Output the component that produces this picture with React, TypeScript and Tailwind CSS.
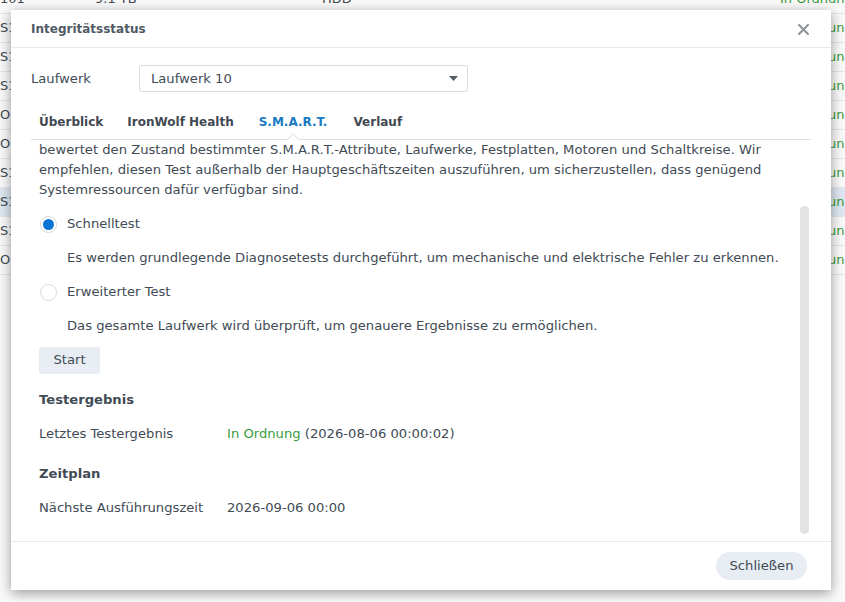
import React from 'react';

const font = { fontFamily: '"DejaVu Sans", Verdana, sans-serif' };

const bgRows = [
  { a: '101', b: '9.1 TB', c: 'HDD' },
  { a: 'S1' },
  { a: 'S1' },
  { a: 'S1' },
  { a: 'O1' },
  { a: 'O1' },
  { a: 'S1' },
  { a: 'S1', active: true },
  { a: 'S1' },
  { a: 'O1' },
];

function BackgroundTable() {
  return (
    <div className="mt-[-15px]">
      {bgRows.map((r, i) => (
        <div
          key={i}
          className={`flex h-[29px] items-center border-b border-[#e3e6e9] text-[13px] text-[#414b55] ${r.active ? 'bg-[#dfe8f2]' : ''}`}
        >
          <span className="w-[95px] shrink-0">{r.a}</span>
          <span className="w-[227px] shrink-0">{r.b}</span>
          <span className="w-[458px] shrink-0">{r.c}</span>
          <span className="shrink-0 whitespace-nowrap text-[#3a9c3a]">In Ordnung</span>
        </div>
      ))}
    </div>
  );
}

function Radio({ checked, label }: { checked?: boolean; label: string }) {
  return (
    <div className="flex h-[34px] items-center">
      <span className="ml-[1px] flex h-[17px] w-[17px] items-center justify-center rounded-full border border-[#d6dbe0] bg-white">
        {checked && <span className="h-[11px] w-[11px] rounded-full bg-[#0d74d6]" />}
      </span>
      <span className="ml-[10px]">{label}</span>
    </div>
  );
}

export default function App() {
  return (
    <div className="relative h-[602px] w-[845px] overflow-hidden bg-[#fafafa]" style={font}>
      <BackgroundTable />

      {/* dialog */}
      <div className="absolute left-[11px] top-[10px] flex h-[580px] w-[820px] flex-col bg-white text-[13.15px] text-[#414b55] shadow-[0_3px_12px_rgba(0,0,0,0.4)]">
        <div className="flex h-[38px] shrink-0 items-center justify-between border-b border-[#e6e9ec] pl-[20px] pr-[22px]">
          <span className="text-[12px] font-bold text-[#505a64]">Integritätsstatus</span>
          <svg width="11" height="11" viewBox="0 0 11 11" className="mt-[1px]">
            <path d="M1 1 L10 10 M10 1 L1 10" stroke="#8c939b" strokeWidth="2" strokeLinecap="round" />
          </svg>
        </div>

        <div className="flex min-h-0 flex-1 flex-col px-[20px]">
          <div className="mt-[17px] flex h-[27px] items-center">
            <span className="mt-[1px] w-[108px]">Laufwerk</span>
            <div className="flex h-[27px] w-[329px] items-center justify-between rounded-[3px] border border-[#d7dce1] pl-[11px] pr-[9px]">
              <span className="mt-[1px]">Laufwerk 10</span>
              <svg width="9" height="5" viewBox="0 0 9 5">
                <path d="M0 0 L9 0 L4.5 5 Z" fill="#555d66" />
              </svg>
            </div>
          </div>

          <div className="mt-[14px] flex h-[34px] items-center border-b border-[#dde1e5] pl-[8px] text-[12px] font-bold text-[#3f4952]">
            <span className="mt-[-1px]">Überblick</span>
            <span className="ml-[24px] mt-[-1px]">IronWolf Health</span>
            <span className="relative ml-[25px] flex h-full items-center text-[#1a7ac2]">
              <span className="mt-[-1px]">S.M.A.R.T.</span>
              <span className="absolute bottom-[-5px] left-1/2 h-[9px] w-[9px] -translate-x-1/2 rotate-45 border-l border-t border-[#dde1e5] bg-white" />
            </span>
            <span className="ml-[26px] mt-[-1px]">Verlauf</span>
          </div>

          <div className="relative min-h-0 flex-1 overflow-hidden pl-[8px]">
            <p className="mt-0 whitespace-nowrap leading-[20px]">
              bewertet den Zustand bestimmter S.M.A.R.T.-Attribute, Laufwerke, Festplatten, Motoren und Schaltkreise. Wir
              <br />
              empfehlen, diesen Test außerhalb der Hauptgeschäftszeiten auszuführen, um sicherzustellen, dass genügend
              <br />
              Systemressourcen dafür verfügbar sind.
            </p>
            <div className="mt-[7px]">
              <Radio checked label="Schnelltest" />
              <div className="flex h-[34px] items-center pl-[28px]">
                Es werden grundlegende Diagnosetests durchgeführt, um mechanische und elektrische Fehler zu erkennen.
              </div>
              <Radio label="Erweiterter Test" />
              <div className="flex h-[34px] items-center pl-[28px]">
                Das gesamte Laufwerk wird überprüft, um genauere Ergebnisse zu ermöglichen.
              </div>
              <button className="mt-[4px] h-[27px] w-[61px] rounded-[2px] bg-[#e8edf3] pb-[1px] text-[#414b55]">Start</button>
              <div className="mt-[9px] flex h-[34px] items-center font-bold">Testergebnis</div>
              <div className="flex h-[34px] items-center">
                <span className="w-[188px]">Letztes Testergebnis</span>
                <span>
                  <span className="text-[#3a9c3a]">In Ordnung</span> (2026-08-06 00:00:02)
                </span>
              </div>
              <div className="mt-[6px] flex h-[34px] items-center font-bold">Zeitplan</div>
              <div className="flex h-[34px] items-center">
                <span className="w-[188px]">Nächste Ausführungszeit</span>
                <span>2026-09-06 00:00</span>
              </div>
            </div>
            <div className="absolute right-[2px] top-[66px] h-[328px] w-[9px] rounded-full bg-[#e3e3e3]" />
          </div>
        </div>

        <div className="flex h-[49px] shrink-0 items-center justify-end border-t border-[#e6e9ec] pr-[24px]">
          <button className="h-[28px] w-[91px] rounded-full bg-[#e8edf3] text-[#414b55]">Schließen</button>
        </div>
      </div>
    </div>
  );
}
